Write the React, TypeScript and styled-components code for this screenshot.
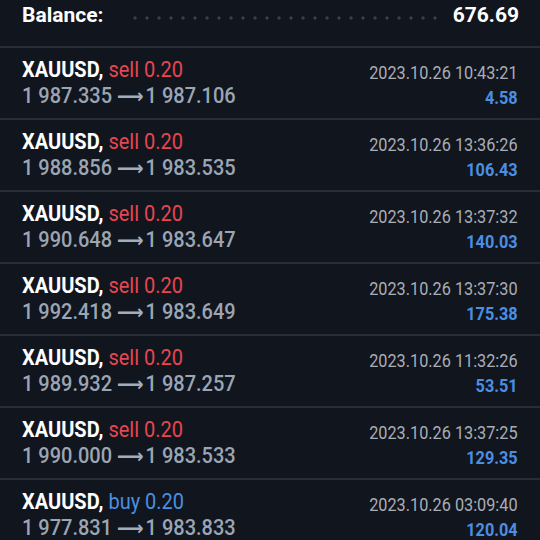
import React from "react";
import styled, { createGlobalStyle } from "styled-components";

const Global = createGlobalStyle`
  html, body { margin: 0; padding: 0; background: #11151e; }
  body { font-family: Roboto, "Noto Sans", sans-serif; -webkit-font-smoothing: antialiased; }
`;

const Screen = styled.div`
  width: 540px;
  height: 540px;
  overflow: hidden;
  background: #11151e;
  color: #fff;
`;

const BalanceBar = styled.div`
  height: 46px;
  display: flex;
  align-items: flex-start;
  padding: 0 21px 0 22px;
  box-sizing: border-box;
`;

const BalanceLabel = styled.span`
  font-size: 21px;
  font-weight: 700;
  line-height: 30px;
  color: #ffffff;
`;

const Dots = styled.span`
  flex: 1;
  height: 4px;
  margin: 16px 16px 0 26px;
  background-image: radial-gradient(circle, #3b404a 1.4px, transparent 1.8px);
  background-size: 12px 4px;
  background-repeat: repeat-x;
`;

const BalanceValue = styled.span`
  font-size: 21px;
  font-weight: 700;
  line-height: 30px;
  color: #ffffff;
`;

const Row = styled.div`
  height: 72px;
  box-sizing: border-box;
  border-top: 2px solid #282d37;
  display: flex;
  justify-content: space-between;
  padding: 9px 22px 0 22px;
`;

const Left = styled.div`
  display: flex;
  flex-direction: column;
  transform: scaleX(0.93);
  transform-origin: left center;
`;

const Right = styled.div`
  display: flex;
  flex-direction: column;
  align-items: flex-end;
  padding-top: 3.5px;
  transform: scaleX(0.87);
  transform-origin: right center;
`;

const Title = styled.div`
  font-size: 21.5px;
  line-height: 25.6px;
  white-space: nowrap;
`;

const Symbol = styled.span`
  font-weight: 700;
  color: #ffffff;
`;

const Side = styled.span<{ $buy?: boolean }>`
  font-weight: 400;
  color: ${(p) => (p.$buy ? "#4a8fe3" : "#e8464f")};
`;

const Prices = styled.div`
  font-size: 21.5px;
  line-height: 25.6px;
  font-weight: 500;
  color: #9ba5b3;
  white-space: nowrap;
`;

const Arrow = styled.span`
  font-family: "DejaVu Sans", sans-serif;
  font-size: 20px;
  font-weight: 700;
  color: #a3adba;
  margin: 0 2px 0 0;
`;

const DateText = styled.div`
  font-size: 18.7px;
  line-height: 25px;
  color: #a9aeb6;
  white-space: nowrap;
`;

const Profit = styled.div`
  font-size: 18.7px;
  line-height: 25px;
  font-weight: 700;
  color: #4a8fe3;
`;

type Deal = { side: "sell" | "buy"; open: string; close: string; time: string; profit: string };

const deals: Deal[] = [
  { side: "sell", open: "1 987.335", close: "1 987.106", time: "2023.10.26 10:43:21", profit: "4.58" },
  { side: "sell", open: "1 988.856", close: "1 983.535", time: "2023.10.26 13:36:26", profit: "106.43" },
  { side: "sell", open: "1 990.648", close: "1 983.647", time: "2023.10.26 13:37:32", profit: "140.03" },
  { side: "sell", open: "1 992.418", close: "1 983.649", time: "2023.10.26 13:37:30", profit: "175.38" },
  { side: "sell", open: "1 989.932", close: "1 987.257", time: "2023.10.26 11:32:26", profit: "53.51" },
  { side: "sell", open: "1 990.000", close: "1 983.533", time: "2023.10.26 13:37:25", profit: "129.35" },
  { side: "buy", open: "1 977.831", close: "1 983.833", time: "2023.10.26 03:09:40", profit: "120.04" },
];

export default function App() {
  return (
    <Screen>
      <Global />
      <BalanceBar>
        <BalanceLabel>Balance:</BalanceLabel>
        <Dots />
        <BalanceValue>676.69</BalanceValue>
      </BalanceBar>
      {deals.map((d, i) => (
        <Row key={i}>
          <Left>
            <Title>
              <Symbol>XAUUSD,</Symbol> <Side $buy={d.side === "buy"}>{d.side} 0.20</Side>
            </Title>
            <Prices>
              {d.open} <Arrow>⟶</Arrow>{d.close}
            </Prices>
          </Left>
          <Right>
            <DateText>{d.time}</DateText>
            <Profit>{d.profit}</Profit>
          </Right>
        </Row>
      ))}
    </Screen>
  );
}
